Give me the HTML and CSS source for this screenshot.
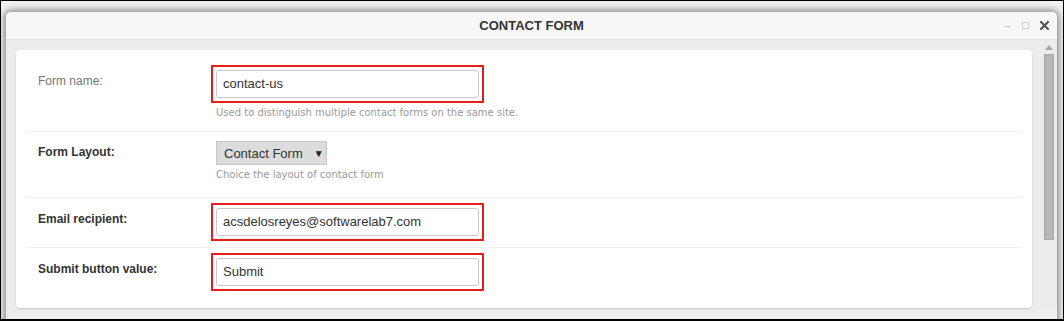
FILE: index.html
```html
<!DOCTYPE html>
<html>
<head>
<meta charset="utf-8">
<link rel="stylesheet" href="styles.css">
</head>
<body>
<div class="frame">
  <div class="window">
    <div class="titlebar">
      <span class="title">CONTACT FORM</span>
      <div class="controls">
        <span class="ctl-min"></span>
        <span class="ctl-max"></span>
        <svg class="ctl-close" width="9" height="9" viewBox="0 0 9 9"><path d="M1 1 L8 8 M8 1 L1 8" stroke="#555" stroke-width="2.2" stroke-linecap="square"/></svg>
      </div>
    </div>
    <div class="wbody">
      <div class="card">
        <div class="row">
          <div class="label">Form name:</div>
          <div class="field">
            <div class="hl"><div class="input">contact-us</div></div>
            <div class="help">Used to distinguish multiple contact forms on the same site.</div>
          </div>
        </div>
        <div class="row row-select">
          <div class="label strong">Form Layout:</div>
          <div class="field">
            <div class="select"><span>Contact Form</span><span class="caret">&#9660;</span></div>
            <div class="help">Choice the layout of contact form</div>
          </div>
        </div>
        <div class="row">
          <div class="label strong">Email recipient:</div>
          <div class="field">
            <div class="hl"><div class="input">acsdelosreyes@softwarelab7.com</div></div>
          </div>
        </div>
        <div class="row last">
          <div class="label strong">Submit button value:</div>
          <div class="field">
            <div class="hl"><div class="input">Submit</div></div>
          </div>
        </div>
      </div>
      <div class="scroll">
        <div class="arrow"></div>
        <div class="thumb"></div>
      </div>
    </div>
  </div>
</div>
</body>
</html>
```

FILE: styles.css
```css
* { box-sizing: border-box; }
html, body { margin: 0; padding: 0; }
body {
  width: 1064px;
  height: 321px;
  overflow: hidden;
  font-family: "Liberation Sans", Arial, sans-serif;
}
.frame {
  width: 1064px;
  height: 321px;
  border: 1px solid #000;
  border-bottom-width: 2px;
  background: #f2f2f2;
  padding: 11px 6px 0 5px;
  overflow: hidden;
}
.window {
  background: #ededed;
  border-radius: 5px 5px 0 0;
  box-shadow: 0 0 7px 2px rgba(0,0,0,0.45);
  height: 330px;
}
.titlebar {
  height: 28px;
  background: #f7f7f7;
  border-bottom: 1px solid #e0e0e0;
  border-radius: 5px 5px 0 0;
  display: flex;
  align-items: center;
  justify-content: center;
  position: relative;
}
.title {
  font-weight: bold;
  font-size: 13px;
  color: #333;
}
.controls {
  position: absolute;
  right: 8px;
  top: 9px;
  display: flex;
  align-items: center;
  gap: 11px;
}
.ctl-min {
  width: 7px;
  height: 1px;
  background: #cfcfcf;
  margin-top: 2px;
}
.ctl-max {
  width: 7px;
  height: 7px;
  border: 1px solid #cfcfcf;
}
.ctl-close { display: block; }
.wbody {
  display: flex;
  align-items: flex-start;
  padding: 10px 3px 0 10px;
  background-color: #ececec;
}
.card {
  flex: 1;
  background: #fff;
  border-radius: 4px;
  box-shadow: 0 1px 2px rgba(0,0,0,0.18);
  padding: 10px 10px 11px 10px;
  height: 258px;
}
.row {
  display: flex;
  padding: 5px 0 6px 0;
  border-bottom: 1px solid #efefef;
}
.row.last { border-bottom: none; }
.label {
  width: 185px;
  padding: 9px 0 0 12px;
  font-size: 12px;
  line-height: 14px;
  color: #777;
  flex-shrink: 0;
}
.label.strong {
  font-weight: bold;
  color: #333;
}
.row-select .label { padding-top: 8px; }
.field { display: flex; flex-direction: column; align-items: flex-start; }
.hl {
  border: 2px solid #ea1c1c;
  padding: 3px;
}
.input {
  width: 263px;
  height: 28px;
  border: 1px solid #c9c9c9;
  border-radius: 3px;
  padding: 0 6px;
  font-size: 13px;
  line-height: 26px;
  color: #333;
  background: #fff;
}
.help {
  font-family: "DejaVu Sans", Verdana, sans-serif;
  font-size: 10px;
  line-height: 16px;
  color: #9a9a9a;
  margin: 2px 0 4px 5px;
}
.row-select .select {
  margin: 4px 0 0 5px;
}
.select {
  width: 111px;
  height: 24px;
  background: #dcdcdc;
  border: 1px solid #c8c8c8;
  display: flex;
  align-items: center;
  padding: 0 0 0 7px;
  font-size: 13px;
  color: #333;
}
.caret {
  font-size: 10px;
  margin-left: 11px;
  color: #222;
}
.row-select .help { margin-bottom: 8px; }
.scroll {
  width: 10px;
  margin: -5px 0 0 12px;
  display: flex;
  flex-direction: column;
  align-items: center;
}
.arrow {
  width: 0;
  height: 0;
  border-left: 4px solid transparent;
  border-right: 4px solid transparent;
  border-bottom: 5px solid #aaa;
}
.thumb {
  margin-top: 4px;
  width: 10px;
  height: 186px;
  background: #b7b7b7;
  border: 1px solid #a8a8a8;
}
```
